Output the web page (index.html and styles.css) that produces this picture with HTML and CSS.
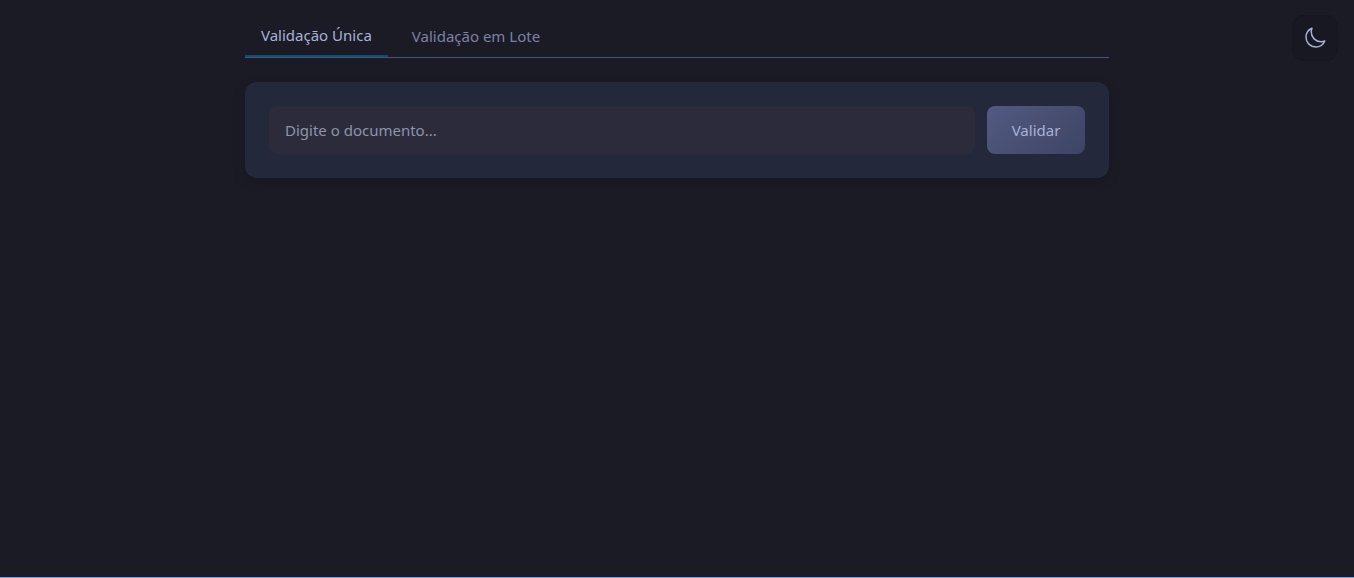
FILE: index.html
```html
<!DOCTYPE html>
<html lang="pt-BR">
<head>
<meta charset="utf-8">
<meta name="viewport" content="width=device-width, initial-scale=1">
<title>Validação de documentos</title>
<link rel="stylesheet" href="styles.css">
</head>
<body>
<button class="theme-toggle" type="button" aria-label="Alternar tema">
<svg class="theme-icon" viewBox="0 0 24 24" aria-hidden="true"><path d="M21.752 15.002A9.72 9.72 0 0 1 18 15.75c-5.385 0-9.75-4.365-9.75-9.75 0-1.33.266-2.597.748-3.752A9.753 9.753 0 0 0 3 11.25C3 16.635 7.365 21 12.75 21a9.753 9.753 0 0 0 9.002-5.998Z"/></svg>
</button>
<main class="container">
<nav class="tabs" role="tablist">
<button class="tab tab-active" type="button" role="tab" aria-selected="true">Validação Única</button>
<button class="tab" type="button" role="tab" aria-selected="false">Validação em Lote</button>
</nav>
<form class="card">
<input class="document-input" type="text" placeholder="Digite o documento..." aria-label="Documento">
<button class="submit" type="submit">Validar</button>
</form>
</main>
</body>
</html>
```
FILE: styles.css
```css
* {
  box-sizing: border-box;
}

body {
  min-height: 100vh;
  margin: 0;
  padding: 16px;
  border-bottom: 1px solid #7a9de8;
  background: #1b1b26;
  color: #a9b1d6;
  font: 15px/24px "Noto Sans", sans-serif;
}

button,
input {
  font: inherit;
}

.container {
  max-width: 864px;
  margin: 0 auto;
}

.tabs {
  display: flex;
  gap: 8px;
  height: 42px;
  margin-bottom: 24px;
  border-bottom: 1px solid #4a5277;
}

.tab {
  padding: 0 16px 2px;
  border: 0;
  background: none;
  color: #7d81a3;
  cursor: pointer;
}

.tab-active {
  border-bottom: 2px solid #0f4c75;
  color: #a9b1d6;
}

.card {
  display: flex;
  gap: 12px;
  padding: 24px;
  border-radius: 12px;
  background: #24283b;
  box-shadow: 0 4px 12px rgb(0 0 0 / 15%);
}

.document-input {
  flex: 1;
  min-width: 0;
  height: 48px;
  padding: 0 16px;
  border: 0;
  border-radius: 8px;
  background: #2b2b3c;
  color: #a9b1d6;
}

.document-input::placeholder {
  color: #9094a6;
  opacity: 1;
}

.submit {
  min-width: 98px;
  padding: 12px 24px;
  border: 0;
  border-radius: 8px;
  background: linear-gradient(135deg, #535a82, #3d4463);
  color: #a9b1d6;
  cursor: pointer;
}

.theme-toggle {
  position: fixed;
  top: 15px;
  right: 16px;
  display: grid;
  place-items: center;
  width: 46px;
  height: 46px;
  padding: 0;
  border: 1px solid #161620;
  border-radius: 12px;
  background: #181822;
  color: #a9b1d6;
  cursor: pointer;
}

.theme-icon {
  width: 24px;
  height: 24px;
  fill: none;
  stroke: currentColor;
  stroke-width: 1.5;
  stroke-linecap: round;
  stroke-linejoin: round;
}
```
